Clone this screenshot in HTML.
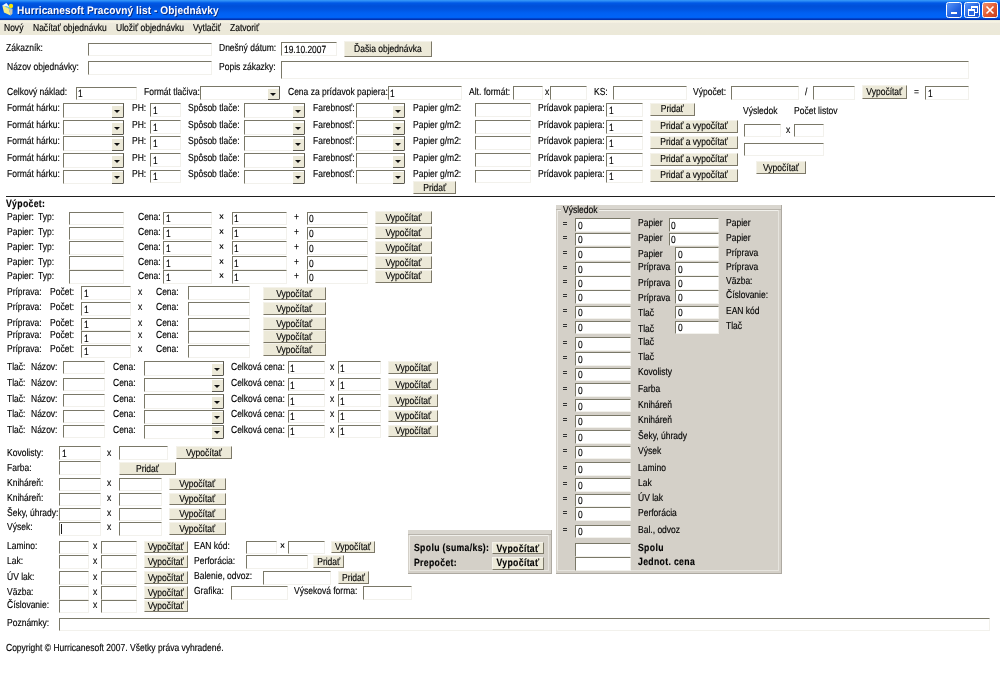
<!DOCTYPE html>
<html><head><meta charset="utf-8"><title>Hurricanesoft Pracovný list - Objednávky</title>
<style>
html,body{text-rendering:geometricPrecision;margin:0;padding:0;width:1000px;height:687px;overflow:hidden;background:#fff;position:relative;font-family:"Liberation Sans",sans-serif;}
#wrap{position:absolute;left:0;top:0;width:1000px;height:687px;will-change:transform;}
.t{position:absolute;white-space:nowrap;font-size:10.2px;line-height:0;color:#000;-webkit-text-stroke:0.15px #000;transform:scaleX(0.835);transform-origin:0 0;}
.t.b{font-weight:bold;font-size:10.4px;letter-spacing:0.4px;}
.in{position:absolute;box-sizing:border-box;background:#fff;border-top:1.5px solid #7a7868;border-left:1.5px solid #7a7868;border-right:1px solid #f2f1ec;border-bottom:1px solid #f2f1ec;}
.in span{-webkit-text-stroke:0.15px #000;position:absolute;left:1.5px;top:2.8px;font-size:10.4px;line-height:10px;color:#000;white-space:nowrap;transform:scaleX(0.81);transform-origin:0 0;}
.sel{border-right:1px solid #5a5850;}
.sel i{position:absolute;right:0;top:1.5px;bottom:-1px;width:11.5px;background:#ece9d8;border-bottom:1.3px solid #5a5850;box-sizing:border-box;}
.sel i:after{content:"";position:absolute;left:2.8px;top:4.2px;border-left:3px solid transparent;border-right:3px solid transparent;border-top:3.5px solid #111;}
.bt{position:absolute;box-sizing:border-box;background:#ece9d8;border-top:1px solid #f4f2ea;border-left:1px solid #f4f2ea;border-right:1.3px solid #7c7868;border-bottom:1.5px solid #7c7868;overflow:hidden;}
.bt span{position:absolute;left:-20px;right:-20px;text-align:center;white-space:nowrap;font-size:10.2px;line-height:0;color:#000;-webkit-text-stroke:0.15px #000;transform:scaleX(0.835);transform-origin:50% 0;}
.bt.b span{font-weight:bold;font-size:10.4px;letter-spacing:0.4px;}
#tb{position:absolute;left:0;top:0;width:1000px;height:20px;background:linear-gradient(#3a9cf8 0px,#2484f4 1.2px,#0058e6 3px,#0050d8 6px,#0054e0 9px,#0060f2 13px,#0064f8 17.4px,#0042c8 18.6px,#0030b0 19.6px,#2050a0 20px);}
#tb .tt{position:absolute;left:16.8px;top:10.9px;font-weight:bold;color:#fff;font-size:11px;line-height:0;letter-spacing:0.1px;text-shadow:1px 1px 0 #0a2a80;transform:scaleX(0.92);transform-origin:0 0;}
#mb{position:absolute;left:0;top:20px;width:1000px;height:15px;background:linear-gradient(#d8dcd8 0px,#f7f4e2 1px,#f4f0e2 2.4px,#ece9dc 3.5px,#ece9d8 100%);}
.wb{position:absolute;top:1.5px;width:16px;height:16px;box-sizing:border-box;border:1px solid #fff;border-radius:2.5px;background:linear-gradient(135deg,#5a96f8,#2262e0 60%,#1850d0);}
</style></head><body><div id="wrap">
<div id="tb">
<svg style="position:absolute;left:0;top:0" width="18" height="18" viewBox="0 0 18 18"><path d="M2.3 5.6 L8.6 7.2 L10.6 15.6 L4 12.6 Z" fill="#f4ec88"/><path d="M8.4 7.4 L12.6 8.8 L12.4 13.8 L10.6 15.4 Z" fill="#c8c4b0"/><path d="M2.2 5.4 L6.4 3.0 L9 6.2 L8.6 7.3 Z" fill="#eef6ff"/><path d="M5.5 6.6 L9 7.8 L11.5 9.4" stroke="#58c8ee" stroke-width="1.1" fill="none"/><circle cx="11" cy="6" r="2.2" fill="#f6e600"/></svg>
<div class="tt">Hurricanesoft Pracovný list - Objednávky</div>
<div class="wb" style="left:946px"><div style="position:absolute;left:4px;top:9px;width:6px;height:2px;background:#fff"></div></div>
<div class="wb" style="left:964px"><div style="position:absolute;left:6px;top:3px;width:5px;height:4px;border:1px solid #fff;border-top-width:2px"></div><div style="position:absolute;left:3px;top:6px;width:5px;height:4px;border:1px solid #fff;border-top-width:2px;background:#2a66e0"></div></div>
<div class="wb" style="left:982px;background:linear-gradient(135deg,#f09070,#e05a30 55%,#c84020)"><svg style="position:absolute;left:2px;top:2px" width="10" height="10" viewBox="0 0 10 10"><path d="M1.5 1.5 L8.5 8.5 M8.5 1.5 L1.5 8.5" stroke="#fff" stroke-width="1.6"/></svg></div>
</div>
<div id="mb"></div>
<div class="t" style="left:4.2px;top:29.17px">Nový</div>
<div class="t" style="left:33px;top:29.17px">Načítať objednávku</div>
<div class="t" style="left:115.7px;top:29.17px">Uložiť objednávku</div>
<div class="t" style="left:192.7px;top:29.17px">Vytlačiť</div>
<div class="t" style="left:230px;top:29.17px">Zatvoriť</div>
<div class="t" style="left:6px;top:49.17px">Zákazník:</div>
<div class="in" style="left:87.5px;top:42.5px;width:124.20px;height:13.20px"></div>
<div class="t" style="left:219px;top:49.17px">Dnešný dátum:</div>
<div class="in" style="left:281.4px;top:42.3px;width:55.90px;height:13.50px"><span>19.10.2007</span></div>
<div class="bt" style="left:344.3px;top:40.7px;width:87.90px;height:16.40px"><span style="top:8.67px">Ďašia objednávka</span></div>
<div class="t" style="left:6.5px;top:68.17px">Názov objednávky:</div>
<div class="in" style="left:87.5px;top:61.2px;width:124.20px;height:13.80px"></div>
<div class="t" style="left:219px;top:68.17px">Popis zákazky:</div>
<div class="in" style="left:281.4px;top:61px;width:687.20px;height:18.40px"></div>
<div class="t" style="left:6.8px;top:93.17px">Celkový náklad:</div>
<div class="in" style="left:75.5px;top:86.5px;width:61.50px;height:13.00px"><span>1</span></div>
<div class="t" style="left:144px;top:93.17px">Formát tlačiva:</div>
<div class="in sel" style="left:200px;top:86px;width:80.00px;height:14.00px"><i></i></div>
<div class="t" style="left:287.5px;top:93.17px">Cena za prídavok papiera:</div>
<div class="in" style="left:387.5px;top:86px;width:74.50px;height:13.50px"><span>1</span></div>
<div class="t" style="left:469px;top:93.17px">Alt. formát:</div>
<div class="in" style="left:512.5px;top:86px;width:30.50px;height:13.50px"></div>
<div class="t" style="left:545px;top:93.17px">x</div>
<div class="in" style="left:550px;top:86px;width:37.00px;height:13.50px"></div>
<div class="t" style="left:594px;top:93.17px">KS:</div>
<div class="in" style="left:612.5px;top:86px;width:74.50px;height:13.50px"></div>
<div class="t" style="left:693.4px;top:93.17px">Výpočet:</div>
<div class="in" style="left:731px;top:86px;width:68.00px;height:13.50px"></div>
<div class="t" style="left:805px;top:93.17px">/</div>
<div class="in" style="left:813px;top:86px;width:42.00px;height:13.50px"></div>
<div class="bt" style="left:862px;top:85.4px;width:44.60px;height:13.20px"><span style="top:7.07px">Vypočítať</span></div>
<div class="t" style="left:913.6px;top:93.17px">=</div>
<div class="in" style="left:925px;top:86px;width:43.60px;height:13.50px"><span>1</span></div>
<div class="t" style="left:6.5px;top:109.17px">Formát hárku:</div>
<div class="in sel" style="left:63px;top:103.2px;width:61.00px;height:14.50px"><i></i></div>
<div class="t" style="left:132px;top:109.17px">PH:</div>
<div class="in" style="left:150px;top:103.2px;width:31.00px;height:13.50px"><span>1</span></div>
<div class="t" style="left:188px;top:109.17px">Spôsob tlače:</div>
<div class="in sel" style="left:244px;top:103.2px;width:61.00px;height:14.50px"><i></i></div>
<div class="t" style="left:312.5px;top:109.17px">Farebnosť:</div>
<div class="in sel" style="left:356px;top:103.2px;width:49.00px;height:14.50px"><i></i></div>
<div class="t" style="left:412.5px;top:109.17px">Papier g/m2:</div>
<div class="in" style="left:475px;top:103.2px;width:56.00px;height:13.50px"></div>
<div class="t" style="left:537.5px;top:109.17px">Prídavok papiera:</div>
<div class="in" style="left:606px;top:103.2px;width:37.00px;height:13.50px"><span>1</span></div>
<div class="bt" style="left:650px;top:102.7px;width:44.60px;height:13.00px"><span style="top:6.37px">Pridať</span></div>
<div class="t" style="left:6.5px;top:126.17px">Formát hárku:</div>
<div class="in sel" style="left:63px;top:120px;width:61.00px;height:14.50px"><i></i></div>
<div class="t" style="left:132px;top:126.17px">PH:</div>
<div class="in" style="left:150px;top:120px;width:31.00px;height:13.50px"><span>1</span></div>
<div class="t" style="left:188px;top:126.17px">Spôsob tlače:</div>
<div class="in sel" style="left:244px;top:120px;width:61.00px;height:14.50px"><i></i></div>
<div class="t" style="left:312.5px;top:126.17px">Farebnosť:</div>
<div class="in sel" style="left:356px;top:120px;width:49.00px;height:14.50px"><i></i></div>
<div class="t" style="left:412.5px;top:126.17px">Papier g/m2:</div>
<div class="in" style="left:475px;top:120px;width:56.00px;height:13.50px"></div>
<div class="t" style="left:537.5px;top:126.17px">Prídavok papiera:</div>
<div class="in" style="left:606px;top:120px;width:37.00px;height:13.50px"><span>1</span></div>
<div class="bt" style="left:650px;top:119.5px;width:88.00px;height:13.00px"><span style="top:6.37px">Pridať a vypočítať</span></div>
<div class="t" style="left:6.5px;top:142.17px">Formát hárku:</div>
<div class="in sel" style="left:63px;top:136.2px;width:61.00px;height:14.50px"><i></i></div>
<div class="t" style="left:132px;top:142.17px">PH:</div>
<div class="in" style="left:150px;top:136.2px;width:31.00px;height:13.50px"><span>1</span></div>
<div class="t" style="left:188px;top:142.17px">Spôsob tlače:</div>
<div class="in sel" style="left:244px;top:136.2px;width:61.00px;height:14.50px"><i></i></div>
<div class="t" style="left:312.5px;top:142.17px">Farebnosť:</div>
<div class="in sel" style="left:356px;top:136.2px;width:49.00px;height:14.50px"><i></i></div>
<div class="t" style="left:412.5px;top:142.17px">Papier g/m2:</div>
<div class="in" style="left:475px;top:136.2px;width:56.00px;height:13.50px"></div>
<div class="t" style="left:537.5px;top:142.17px">Prídavok papiera:</div>
<div class="in" style="left:606px;top:136.2px;width:37.00px;height:13.50px"><span>1</span></div>
<div class="bt" style="left:650px;top:135.7px;width:88.00px;height:13.00px"><span style="top:6.37px">Pridať a vypočítať</span></div>
<div class="t" style="left:6.5px;top:159.17px">Formát hárku:</div>
<div class="in sel" style="left:63px;top:153px;width:61.00px;height:14.50px"><i></i></div>
<div class="t" style="left:132px;top:159.17px">PH:</div>
<div class="in" style="left:150px;top:153px;width:31.00px;height:13.50px"><span>1</span></div>
<div class="t" style="left:188px;top:159.17px">Spôsob tlače:</div>
<div class="in sel" style="left:244px;top:153px;width:61.00px;height:14.50px"><i></i></div>
<div class="t" style="left:312.5px;top:159.17px">Farebnosť:</div>
<div class="in sel" style="left:356px;top:153px;width:49.00px;height:14.50px"><i></i></div>
<div class="t" style="left:412.5px;top:159.17px">Papier g/m2:</div>
<div class="in" style="left:475px;top:153px;width:56.00px;height:13.50px"></div>
<div class="t" style="left:537.5px;top:159.17px">Prídavok papiera:</div>
<div class="in" style="left:606px;top:153px;width:37.00px;height:13.50px"><span>1</span></div>
<div class="bt" style="left:650px;top:152.5px;width:88.00px;height:13.00px"><span style="top:6.37px">Pridať a vypočítať</span></div>
<div class="t" style="left:6.5px;top:175.17px">Formát hárku:</div>
<div class="in sel" style="left:63px;top:169.5px;width:61.00px;height:14.50px"><i></i></div>
<div class="t" style="left:132px;top:175.17px">PH:</div>
<div class="in" style="left:150px;top:169.5px;width:31.00px;height:13.50px"><span>1</span></div>
<div class="t" style="left:188px;top:175.17px">Spôsob tlače:</div>
<div class="in sel" style="left:244px;top:169.5px;width:61.00px;height:14.50px"><i></i></div>
<div class="t" style="left:312.5px;top:175.17px">Farebnosť:</div>
<div class="in sel" style="left:356px;top:169.5px;width:49.00px;height:14.50px"><i></i></div>
<div class="t" style="left:412.5px;top:175.17px">Papier g/m2:</div>
<div class="in" style="left:475px;top:169.5px;width:56.00px;height:13.50px"></div>
<div class="t" style="left:537.5px;top:175.17px">Prídavok papiera:</div>
<div class="in" style="left:606px;top:169.5px;width:37.00px;height:13.50px"><span>1</span></div>
<div class="bt" style="left:650px;top:169.0px;width:88.00px;height:13.00px"><span style="top:6.37px">Pridať a vypočítať</span></div>
<div class="bt" style="left:412.5px;top:181px;width:43.50px;height:13.00px"><span style="top:6.97px">Pridať</span></div>
<div class="t" style="left:743px;top:112.17px">Výsledok</div>
<div class="t" style="left:793.6px;top:112.17px">Počet listov</div>
<div class="in" style="left:744px;top:123.5px;width:37.00px;height:13.20px"></div>
<div class="t" style="left:785.6px;top:131.17px">x</div>
<div class="in" style="left:793.6px;top:123.5px;width:30.40px;height:13.20px"></div>
<div class="in" style="left:744px;top:142.6px;width:80.00px;height:13.00px"></div>
<div class="bt" style="left:756px;top:161.1px;width:50.00px;height:12.50px"><span style="top:6.72px">Vypočítať</span></div>
<div style="position:absolute;left:6px;top:195.6px;width:989.00px;height:1.30px;background:#1e1e1e"></div>
<div class="t b" style="left:6px;top:205.10px">Výpočet:</div>
<div class="t" style="left:7px;top:218.17px">Papier:</div>
<div class="t" style="left:38.4px;top:218.17px">Typ:</div>
<div class="in" style="left:69px;top:211.5px;width:55.20px;height:13.50px"></div>
<div class="t" style="left:137.5px;top:218.17px">Cena:</div>
<div class="in" style="left:163.1px;top:211.5px;width:48.60px;height:13.50px"><span>1</span></div>
<div class="t" style="left:219px;top:217.72px">×</div>
<div class="in" style="left:231.8px;top:211.5px;width:55.20px;height:13.50px"><span>1</span></div>
<div class="t" style="left:294px;top:218.17px">+</div>
<div class="in" style="left:306.8px;top:211.5px;width:61.20px;height:13.50px"><span>0</span></div>
<div class="bt" style="left:375px;top:210.7px;width:57.00px;height:13.00px"><span style="top:6.97px">Vypočítať</span></div>
<div class="t" style="left:7px;top:233.17px">Papier:</div>
<div class="t" style="left:38.4px;top:233.17px">Typ:</div>
<div class="in" style="left:69px;top:226.5px;width:55.20px;height:13.50px"></div>
<div class="t" style="left:137.5px;top:233.17px">Cena:</div>
<div class="in" style="left:163.1px;top:226.5px;width:48.60px;height:13.50px"><span>1</span></div>
<div class="t" style="left:219px;top:232.72px">×</div>
<div class="in" style="left:231.8px;top:226.5px;width:55.20px;height:13.50px"><span>1</span></div>
<div class="t" style="left:294px;top:233.17px">+</div>
<div class="in" style="left:306.8px;top:226.5px;width:61.20px;height:13.50px"><span>0</span></div>
<div class="bt" style="left:375px;top:225.7px;width:57.00px;height:13.00px"><span style="top:6.97px">Vypočítať</span></div>
<div class="t" style="left:7px;top:248.17px">Papier:</div>
<div class="t" style="left:38.4px;top:248.17px">Typ:</div>
<div class="in" style="left:69px;top:241.4px;width:55.20px;height:13.50px"></div>
<div class="t" style="left:137.5px;top:248.17px">Cena:</div>
<div class="in" style="left:163.1px;top:241.4px;width:48.60px;height:13.50px"><span>1</span></div>
<div class="t" style="left:219px;top:247.72px">×</div>
<div class="in" style="left:231.8px;top:241.4px;width:55.20px;height:13.50px"><span>1</span></div>
<div class="t" style="left:294px;top:248.17px">+</div>
<div class="in" style="left:306.8px;top:241.4px;width:61.20px;height:13.50px"><span>0</span></div>
<div class="bt" style="left:375px;top:240.6px;width:57.00px;height:13.00px"><span style="top:6.97px">Vypočítať</span></div>
<div class="t" style="left:7px;top:263.17px">Papier:</div>
<div class="t" style="left:38.4px;top:263.17px">Typ:</div>
<div class="in" style="left:69px;top:256.4px;width:55.20px;height:13.50px"></div>
<div class="t" style="left:137.5px;top:263.17px">Cena:</div>
<div class="in" style="left:163.1px;top:256.4px;width:48.60px;height:13.50px"><span>1</span></div>
<div class="t" style="left:219px;top:262.72px">×</div>
<div class="in" style="left:231.8px;top:256.4px;width:55.20px;height:13.50px"><span>1</span></div>
<div class="t" style="left:294px;top:263.17px">+</div>
<div class="in" style="left:306.8px;top:256.4px;width:61.20px;height:13.50px"><span>0</span></div>
<div class="bt" style="left:375px;top:255.59999999999997px;width:57.00px;height:13.00px"><span style="top:6.97px">Vypočítať</span></div>
<div class="t" style="left:7px;top:277.17px">Papier:</div>
<div class="t" style="left:38.4px;top:277.17px">Typ:</div>
<div class="in" style="left:69px;top:270.3px;width:55.20px;height:13.50px"></div>
<div class="t" style="left:137.5px;top:277.17px">Cena:</div>
<div class="in" style="left:163.1px;top:270.3px;width:48.60px;height:13.50px"><span>1</span></div>
<div class="t" style="left:219px;top:276.72px">×</div>
<div class="in" style="left:231.8px;top:270.3px;width:55.20px;height:13.50px"><span>1</span></div>
<div class="t" style="left:294px;top:277.17px">+</div>
<div class="in" style="left:306.8px;top:270.3px;width:61.20px;height:13.50px"><span>0</span></div>
<div class="bt" style="left:375px;top:269.5px;width:57.00px;height:13.00px"><span style="top:6.97px">Vypočítať</span></div>
<div class="t" style="left:7px;top:293.17px">Príprava:</div>
<div class="t" style="left:50px;top:293.17px">Počet:</div>
<div class="in" style="left:81px;top:286px;width:49.50px;height:13.50px"><span>1</span></div>
<div class="t" style="left:137.5px;top:293.17px">x</div>
<div class="t" style="left:156px;top:293.17px">Cena:</div>
<div class="in" style="left:188px;top:286px;width:61.50px;height:13.50px"></div>
<div class="bt" style="left:263px;top:287px;width:62.50px;height:12.50px"><span style="top:6.72px">Vypočítať</span></div>
<div class="t" style="left:7px;top:308.17px">Príprava:</div>
<div class="t" style="left:50px;top:308.17px">Počet:</div>
<div class="in" style="left:81px;top:302px;width:49.50px;height:13.50px"><span>1</span></div>
<div class="t" style="left:137.5px;top:308.17px">x</div>
<div class="t" style="left:156px;top:308.17px">Cena:</div>
<div class="in" style="left:188px;top:302px;width:61.50px;height:13.50px"></div>
<div class="bt" style="left:263px;top:302px;width:62.50px;height:12.50px"><span style="top:6.72px">Vypočítať</span></div>
<div class="t" style="left:7px;top:324.17px">Príprava:</div>
<div class="t" style="left:50px;top:324.17px">Počet:</div>
<div class="in" style="left:81px;top:317.5px;width:49.50px;height:13.50px"><span>1</span></div>
<div class="t" style="left:137.5px;top:324.17px">x</div>
<div class="t" style="left:156px;top:324.17px">Cena:</div>
<div class="in" style="left:188px;top:317.5px;width:61.50px;height:13.50px"></div>
<div class="bt" style="left:263px;top:317px;width:62.50px;height:12.50px"><span style="top:6.72px">Vypočítať</span></div>
<div class="t" style="left:7px;top:336.17px">Príprava:</div>
<div class="t" style="left:50px;top:336.17px">Počet:</div>
<div class="in" style="left:81px;top:330.8px;width:49.50px;height:13.50px"><span>1</span></div>
<div class="t" style="left:137.5px;top:336.17px">x</div>
<div class="t" style="left:156px;top:336.17px">Cena:</div>
<div class="in" style="left:188px;top:330.8px;width:61.50px;height:13.50px"></div>
<div class="bt" style="left:263px;top:330px;width:62.50px;height:12.50px"><span style="top:6.72px">Vypočítať</span></div>
<div class="t" style="left:7px;top:350.17px">Príprava:</div>
<div class="t" style="left:50px;top:350.17px">Počet:</div>
<div class="in" style="left:81px;top:344.5px;width:49.50px;height:13.50px"><span>1</span></div>
<div class="t" style="left:137.5px;top:350.17px">x</div>
<div class="t" style="left:156px;top:350.17px">Cena:</div>
<div class="in" style="left:188px;top:344.5px;width:61.50px;height:13.50px"></div>
<div class="bt" style="left:263px;top:343px;width:62.50px;height:12.50px"><span style="top:6.72px">Vypočítať</span></div>
<div class="t" style="left:7px;top:368.17px">Tlač:</div>
<div class="t" style="left:31px;top:368.17px">Názov:</div>
<div class="in" style="left:63px;top:361.2px;width:42.00px;height:13.20px"></div>
<div class="t" style="left:112.5px;top:368.17px">Cena:</div>
<div class="in sel" style="left:144px;top:361.2px;width:80.00px;height:14.50px"><i></i></div>
<div class="t" style="left:231px;top:368.17px">Celková cena:</div>
<div class="in" style="left:287.5px;top:361.2px;width:37.00px;height:13.20px"><span>1</span></div>
<div class="t" style="left:329.5px;top:368.17px">x</div>
<div class="in" style="left:337.5px;top:361.2px;width:43.50px;height:13.20px"><span>1</span></div>
<div class="bt" style="left:387.5px;top:361.2px;width:50.50px;height:12.50px"><span style="top:6.72px">Vypočítať</span></div>
<div class="t" style="left:7px;top:384.17px">Tlač:</div>
<div class="t" style="left:31px;top:384.17px">Názov:</div>
<div class="in" style="left:63px;top:377.9px;width:42.00px;height:13.20px"></div>
<div class="t" style="left:112.5px;top:384.17px">Cena:</div>
<div class="in sel" style="left:144px;top:377.9px;width:80.00px;height:14.50px"><i></i></div>
<div class="t" style="left:231px;top:384.17px">Celková cena:</div>
<div class="in" style="left:287.5px;top:377.9px;width:37.00px;height:13.20px"><span>1</span></div>
<div class="t" style="left:329.5px;top:384.17px">x</div>
<div class="in" style="left:337.5px;top:377.9px;width:43.50px;height:13.20px"><span>1</span></div>
<div class="bt" style="left:387.5px;top:377.9px;width:50.50px;height:12.50px"><span style="top:6.72px">Vypočítať</span></div>
<div class="t" style="left:7px;top:400.17px">Tlač:</div>
<div class="t" style="left:31px;top:400.17px">Názov:</div>
<div class="in" style="left:63px;top:394px;width:42.00px;height:13.20px"></div>
<div class="t" style="left:112.5px;top:400.17px">Cena:</div>
<div class="in sel" style="left:144px;top:394px;width:80.00px;height:14.50px"><i></i></div>
<div class="t" style="left:231px;top:400.17px">Celková cena:</div>
<div class="in" style="left:287.5px;top:394px;width:37.00px;height:13.20px"><span>1</span></div>
<div class="t" style="left:329.5px;top:400.17px">x</div>
<div class="in" style="left:337.5px;top:394px;width:43.50px;height:13.20px"><span>1</span></div>
<div class="bt" style="left:387.5px;top:394px;width:50.50px;height:12.50px"><span style="top:6.72px">Vypočítať</span></div>
<div class="t" style="left:7px;top:415.17px">Tlač:</div>
<div class="t" style="left:31px;top:415.17px">Názov:</div>
<div class="in" style="left:63px;top:409.5px;width:42.00px;height:13.20px"></div>
<div class="t" style="left:112.5px;top:415.17px">Cena:</div>
<div class="in sel" style="left:144px;top:409.5px;width:80.00px;height:14.50px"><i></i></div>
<div class="t" style="left:231px;top:415.17px">Celková cena:</div>
<div class="in" style="left:287.5px;top:409.5px;width:37.00px;height:13.20px"><span>1</span></div>
<div class="t" style="left:329.5px;top:415.17px">x</div>
<div class="in" style="left:337.5px;top:409.5px;width:43.50px;height:13.20px"><span>1</span></div>
<div class="bt" style="left:387.5px;top:409.5px;width:50.50px;height:12.50px"><span style="top:6.72px">Vypočítať</span></div>
<div class="t" style="left:7px;top:431.17px">Tlač:</div>
<div class="t" style="left:31px;top:431.17px">Názov:</div>
<div class="in" style="left:63px;top:424.6px;width:42.00px;height:13.20px"></div>
<div class="t" style="left:112.5px;top:431.17px">Cena:</div>
<div class="in sel" style="left:144px;top:424.6px;width:80.00px;height:14.50px"><i></i></div>
<div class="t" style="left:231px;top:431.17px">Celková cena:</div>
<div class="in" style="left:287.5px;top:424.6px;width:37.00px;height:13.20px"><span>1</span></div>
<div class="t" style="left:329.5px;top:431.17px">x</div>
<div class="in" style="left:337.5px;top:424.6px;width:43.50px;height:13.20px"><span>1</span></div>
<div class="bt" style="left:387.5px;top:424.6px;width:50.50px;height:12.50px"><span style="top:6.72px">Vypočítať</span></div>
<div class="t" style="left:6.5px;top:454.17px">Kovolisty:</div>
<div class="in" style="left:59px;top:446px;width:42.00px;height:13.50px"><span>1</span></div>
<div class="t" style="left:106.5px;top:454.17px">x</div>
<div class="in" style="left:119px;top:446px;width:48.50px;height:13.50px"></div>
<div class="bt" style="left:176px;top:446px;width:56.00px;height:12.50px"><span style="top:6.72px">Vypočítať</span></div>
<div class="t" style="left:6.5px;top:469.17px">Farba:</div>
<div class="in" style="left:59px;top:461px;width:42.00px;height:13.50px"></div>
<div class="bt" style="left:119px;top:462px;width:57.00px;height:12.50px"><span style="top:6.72px">Pridať</span></div>
<div class="t" style="left:6.5px;top:484.17px">Kniháreň:</div>
<div class="in" style="left:59px;top:477.5px;width:42.00px;height:13.50px"></div>
<div class="t" style="left:106.5px;top:484.17px">x</div>
<div class="in" style="left:119px;top:477.5px;width:43.00px;height:13.50px"></div>
<div class="bt" style="left:169px;top:477.5px;width:56.50px;height:12.50px"><span style="top:6.72px">Vypočítať</span></div>
<div class="t" style="left:6.5px;top:499.17px">Kniháreň:</div>
<div class="in" style="left:59px;top:492.5px;width:42.00px;height:13.50px"></div>
<div class="t" style="left:106.5px;top:499.17px">x</div>
<div class="in" style="left:119px;top:492.5px;width:43.00px;height:13.50px"></div>
<div class="bt" style="left:169px;top:492.5px;width:56.50px;height:12.50px"><span style="top:6.72px">Vypočítať</span></div>
<div class="t" style="left:6.5px;top:514.17px">Šeky, úhrady:</div>
<div class="in" style="left:59px;top:507.5px;width:42.00px;height:13.50px"></div>
<div class="t" style="left:106.5px;top:514.17px">x</div>
<div class="in" style="left:119px;top:507.5px;width:43.00px;height:13.50px"></div>
<div class="bt" style="left:169px;top:507.5px;width:56.50px;height:12.50px"><span style="top:6.72px">Vypočítať</span></div>
<div class="t" style="left:6.5px;top:528.17px">Výsek:</div>
<div class="in" style="left:59px;top:522px;width:42.00px;height:13.50px"></div>
<div class="t" style="left:106.5px;top:528.17px">x</div>
<div class="in" style="left:119px;top:522px;width:43.00px;height:13.50px"></div>
<div class="bt" style="left:169px;top:522px;width:56.50px;height:12.50px"><span style="top:6.72px">Vypočítať</span></div>
<div style="position:absolute;left:60.9px;top:523.8px;width:1.10px;height:9.90px;background:#1a1a1a"></div>
<div class="t" style="left:6.5px;top:547.17px">Lamino:</div>
<div class="in" style="left:59px;top:540.5px;width:30.00px;height:13.50px"></div>
<div class="t" style="left:92.5px;top:547.17px">x</div>
<div class="in" style="left:100.5px;top:540.5px;width:36.50px;height:13.50px"></div>
<div class="bt" style="left:144px;top:540.5px;width:43.50px;height:12.50px"><span style="top:6.72px">Vypočítať</span></div>
<div class="t" style="left:6.5px;top:562.17px">Lak:</div>
<div class="in" style="left:59px;top:555px;width:30.00px;height:13.50px"></div>
<div class="t" style="left:92.5px;top:562.17px">x</div>
<div class="in" style="left:100.5px;top:555px;width:36.50px;height:13.50px"></div>
<div class="bt" style="left:144px;top:555px;width:43.50px;height:12.50px"><span style="top:6.72px">Vypočítať</span></div>
<div class="t" style="left:6.5px;top:578.17px">ÚV lak:</div>
<div class="in" style="left:59px;top:571px;width:30.00px;height:13.50px"></div>
<div class="t" style="left:92.5px;top:578.17px">x</div>
<div class="in" style="left:100.5px;top:571px;width:36.50px;height:13.50px"></div>
<div class="bt" style="left:144px;top:571px;width:43.50px;height:12.50px"><span style="top:6.72px">Vypočítať</span></div>
<div class="t" style="left:6.5px;top:593.17px">Väzba:</div>
<div class="in" style="left:59px;top:586px;width:30.00px;height:13.50px"></div>
<div class="t" style="left:92.5px;top:593.17px">x</div>
<div class="in" style="left:100.5px;top:586px;width:36.50px;height:13.50px"></div>
<div class="bt" style="left:144px;top:586px;width:43.50px;height:12.50px"><span style="top:6.72px">Vypočítať</span></div>
<div class="t" style="left:6.5px;top:606.17px">Číslovanie:</div>
<div class="in" style="left:59px;top:599.5px;width:30.00px;height:13.50px"></div>
<div class="t" style="left:92.5px;top:606.17px">x</div>
<div class="in" style="left:100.5px;top:599.5px;width:36.50px;height:13.50px"></div>
<div class="bt" style="left:144px;top:599.5px;width:43.50px;height:12.50px"><span style="top:6.72px">Vypočítať</span></div>
<div class="t" style="left:194px;top:547.17px">EAN kód:</div>
<div class="in" style="left:246px;top:540.5px;width:31.00px;height:13.50px"></div>
<div class="t" style="left:279.5px;top:546.72px">×</div>
<div class="in" style="left:288px;top:540.5px;width:36.50px;height:13.50px"></div>
<div class="bt" style="left:331px;top:540.5px;width:44.00px;height:12.50px"><span style="top:6.72px">Vypočítať</span></div>
<div class="t" style="left:194px;top:562.17px">Perforácia:</div>
<div class="in" style="left:246px;top:555px;width:62.00px;height:13.50px"></div>
<div class="bt" style="left:312.5px;top:555px;width:31.50px;height:12.50px"><span style="top:6.72px">Pridať</span></div>
<div class="t" style="left:194px;top:577.17px">Balenie, odvoz:</div>
<div class="in" style="left:262.5px;top:571px;width:68.50px;height:13.50px"></div>
<div class="bt" style="left:338px;top:571px;width:31.00px;height:12.50px"><span style="top:6.72px">Pridať</span></div>
<div class="t" style="left:194px;top:592.17px">Grafika:</div>
<div class="in" style="left:231px;top:586px;width:56.50px;height:13.50px"></div>
<div class="t" style="left:294px;top:592.17px">Výseková forma:</div>
<div class="in" style="left:363px;top:586px;width:49.00px;height:13.50px"></div>
<div class="t" style="left:6.5px;top:624.17px">Poznámky:</div>
<div class="in" style="left:59px;top:618px;width:930.60px;height:13.00px"></div>
<div class="t" style="left:6px;top:649.17px">Copyright © Hurricanesoft 2007. Všetky práva vyhradené.</div>
<div style="position:absolute;left:408px;top:530px;width:143.70px;height:43.60px;background:#d4d0c8;border-right:1px solid #aeaaa2;border-bottom:1px solid #aeaaa2;box-sizing:border-box"></div>
<div style="position:absolute;left:408px;top:530px;width:142.70px;height:4.00px;background:#d9d6cf"></div>
<div style="position:absolute;left:408px;top:534px;width:142.70px;height:1.00px;background:#b9b5ad"></div>
<div style="position:absolute;left:409px;top:535px;width:138.70px;height:1.00px;background:#f1f0eb"></div>
<div style="position:absolute;left:409px;top:535px;width:1.00px;height:35.60px;background:#eceae4"></div>
<div style="position:absolute;left:547.7px;top:535px;width:1.00px;height:35.60px;background:#e6e4de"></div>
<div style="position:absolute;left:409px;top:569.6px;width:139.70px;height:1.00px;background:#e6e4de"></div>
<div class="t b" style="left:414px;top:549.10px">Spolu (suma/ks):</div>
<div class="bt b" style="left:492px;top:542.4px;width:52.00px;height:12.00px"><span style="top:6.40px">Vypočítať</span></div>
<div class="t b" style="left:414px;top:564.10px">Prepočet:</div>
<div class="bt b" style="left:492px;top:556.5px;width:52.00px;height:13.10px"><span style="top:6.95px">Vypočítať</span></div>
<div style="position:absolute;left:556px;top:205px;width:225.80px;height:368.60px;background:#d4d0c8;border-right:1px solid #aeaaa2;border-bottom:1px solid #aeaaa2;box-sizing:border-box"></div>
<div style="position:absolute;left:556px;top:205px;width:224.80px;height:4.00px;background:#d9d6cf"></div>
<div style="position:absolute;left:556px;top:209px;width:224.80px;height:1.00px;background:#b9b5ad"></div>
<div style="position:absolute;left:557px;top:210px;width:220.80px;height:1.00px;background:#f1f0eb"></div>
<div style="position:absolute;left:557px;top:210px;width:1.00px;height:360.60px;background:#eceae4"></div>
<div style="position:absolute;left:777.8px;top:210px;width:1.00px;height:360.60px;background:#e6e4de"></div>
<div style="position:absolute;left:557px;top:569.6px;width:221.80px;height:1.00px;background:#e6e4de"></div>
<div style="position:absolute;left:561px;top:205px;width:38.00px;height:7.00px;background:#d4d0c8"></div>
<div class="t" style="left:563.3px;top:211.17px">Výsledok</div>
<div style="position:absolute;left:563.3px;top:221.6px;width:4.20px;height:3.20px;border-top:1.2px solid #333;border-bottom:1.2px solid #333;box-sizing:border-box"></div>
<div class="in" style="left:575.4px;top:218px;width:56.10px;height:13.50px"><span>0</span></div>
<div class="t" style="left:637.8px;top:224.17px">Papier</div>
<div class="in" style="left:668.8px;top:218px;width:50.20px;height:13.50px"><span>0</span></div>
<div style="position:absolute;left:563.3px;top:236.29999999999998px;width:4.20px;height:3.20px;border-top:1.2px solid #333;border-bottom:1.2px solid #333;box-sizing:border-box"></div>
<div class="in" style="left:575.4px;top:232.7px;width:56.10px;height:13.50px"><span>0</span></div>
<div class="t" style="left:637.8px;top:239.17px">Papier</div>
<div class="in" style="left:668.8px;top:232.7px;width:50.20px;height:13.50px"><span>0</span></div>
<div style="position:absolute;left:563.3px;top:251.0px;width:4.20px;height:3.20px;border-top:1.2px solid #333;border-bottom:1.2px solid #333;box-sizing:border-box"></div>
<div class="in" style="left:575.4px;top:247.4px;width:56.10px;height:13.50px"><span>0</span></div>
<div class="t" style="left:637.8px;top:255.17px">Papier</div>
<div class="in" style="left:675.4px;top:247.4px;width:43.60px;height:13.50px"><span>0</span></div>
<div style="position:absolute;left:563.3px;top:265.6px;width:4.20px;height:3.20px;border-top:1.2px solid #333;border-bottom:1.2px solid #333;box-sizing:border-box"></div>
<div class="in" style="left:575.4px;top:262px;width:56.10px;height:13.50px"><span>0</span></div>
<div class="t" style="left:637.8px;top:268.17px">Príprava</div>
<div class="in" style="left:675.4px;top:262px;width:43.60px;height:13.50px"><span>0</span></div>
<div style="position:absolute;left:563.3px;top:279.8px;width:4.20px;height:3.20px;border-top:1.2px solid #333;border-bottom:1.2px solid #333;box-sizing:border-box"></div>
<div class="in" style="left:575.4px;top:276.2px;width:56.10px;height:13.50px"><span>0</span></div>
<div class="t" style="left:637.8px;top:284.17px">Príprava</div>
<div class="in" style="left:675.4px;top:276.2px;width:43.60px;height:13.50px"><span>0</span></div>
<div style="position:absolute;left:563.3px;top:293.90000000000003px;width:4.20px;height:3.20px;border-top:1.2px solid #333;border-bottom:1.2px solid #333;box-sizing:border-box"></div>
<div class="in" style="left:575.4px;top:290.3px;width:56.10px;height:13.50px"><span>0</span></div>
<div class="t" style="left:637.8px;top:299.17px">Príprava</div>
<div class="in" style="left:675.4px;top:290.3px;width:43.60px;height:13.50px"><span>0</span></div>
<div style="position:absolute;left:563.3px;top:309.1px;width:4.20px;height:3.20px;border-top:1.2px solid #333;border-bottom:1.2px solid #333;box-sizing:border-box"></div>
<div class="in" style="left:575.4px;top:305.5px;width:56.10px;height:13.50px"><span>0</span></div>
<div class="t" style="left:637.8px;top:314.17px">Tlač</div>
<div class="in" style="left:675.4px;top:305.5px;width:43.60px;height:13.50px"><span>0</span></div>
<div style="position:absolute;left:563.3px;top:324.20000000000005px;width:4.20px;height:3.20px;border-top:1.2px solid #333;border-bottom:1.2px solid #333;box-sizing:border-box"></div>
<div class="in" style="left:575.4px;top:320.6px;width:56.10px;height:13.50px"><span>0</span></div>
<div class="t" style="left:637.8px;top:330.17px">Tlač</div>
<div class="in" style="left:675.4px;top:320.6px;width:43.60px;height:13.50px"><span>0</span></div>
<div style="position:absolute;left:563.3px;top:340.90000000000003px;width:4.20px;height:3.20px;border-top:1.2px solid #333;border-bottom:1.2px solid #333;box-sizing:border-box"></div>
<div class="in" style="left:575.4px;top:337.3px;width:56.10px;height:13.50px"><span>0</span></div>
<div class="t" style="left:637.8px;top:343.17px">Tlač</div>
<div style="position:absolute;left:563.3px;top:355.90000000000003px;width:4.20px;height:3.20px;border-top:1.2px solid #333;border-bottom:1.2px solid #333;box-sizing:border-box"></div>
<div class="in" style="left:575.4px;top:352.3px;width:56.10px;height:13.50px"><span>0</span></div>
<div class="t" style="left:637.8px;top:358.17px">Tlač</div>
<div style="position:absolute;left:563.3px;top:371.1px;width:4.20px;height:3.20px;border-top:1.2px solid #333;border-bottom:1.2px solid #333;box-sizing:border-box"></div>
<div class="in" style="left:575.4px;top:367.5px;width:56.10px;height:13.50px"><span>0</span></div>
<div class="t" style="left:637.8px;top:373.17px">Kovolisty</div>
<div style="position:absolute;left:563.3px;top:386.8px;width:4.20px;height:3.20px;border-top:1.2px solid #333;border-bottom:1.2px solid #333;box-sizing:border-box"></div>
<div class="in" style="left:575.4px;top:383.2px;width:56.10px;height:13.50px"><span>0</span></div>
<div class="t" style="left:637.8px;top:390.17px">Farba</div>
<div style="position:absolute;left:563.3px;top:402.5px;width:4.20px;height:3.20px;border-top:1.2px solid #333;border-bottom:1.2px solid #333;box-sizing:border-box"></div>
<div class="in" style="left:575.4px;top:398.9px;width:56.10px;height:13.50px"><span>0</span></div>
<div class="t" style="left:637.8px;top:406.17px">Kniháreň</div>
<div style="position:absolute;left:563.3px;top:418.20000000000005px;width:4.20px;height:3.20px;border-top:1.2px solid #333;border-bottom:1.2px solid #333;box-sizing:border-box"></div>
<div class="in" style="left:575.4px;top:414.6px;width:56.10px;height:13.50px"><span>0</span></div>
<div class="t" style="left:637.8px;top:421.17px">Kniháreň</div>
<div style="position:absolute;left:563.3px;top:433.90000000000003px;width:4.20px;height:3.20px;border-top:1.2px solid #333;border-bottom:1.2px solid #333;box-sizing:border-box"></div>
<div class="in" style="left:575.4px;top:430.3px;width:56.10px;height:13.50px"><span>0</span></div>
<div class="t" style="left:637.8px;top:436.67px">Šeky, úhrady</div>
<div style="position:absolute;left:563.3px;top:449.1px;width:4.20px;height:3.20px;border-top:1.2px solid #333;border-bottom:1.2px solid #333;box-sizing:border-box"></div>
<div class="in" style="left:575.4px;top:445.5px;width:56.10px;height:13.50px"><span>0</span></div>
<div class="t" style="left:637.8px;top:452.17px">Výsek</div>
<div style="position:absolute;left:563.3px;top:465.6px;width:4.20px;height:3.20px;border-top:1.2px solid #333;border-bottom:1.2px solid #333;box-sizing:border-box"></div>
<div class="in" style="left:575.4px;top:462px;width:56.10px;height:13.50px"><span>0</span></div>
<div class="t" style="left:637.8px;top:469.17px">Lamino</div>
<div style="position:absolute;left:563.3px;top:481.6px;width:4.20px;height:3.20px;border-top:1.2px solid #333;border-bottom:1.2px solid #333;box-sizing:border-box"></div>
<div class="in" style="left:575.4px;top:478px;width:56.10px;height:13.50px"><span>0</span></div>
<div class="t" style="left:637.8px;top:484.17px">Lak</div>
<div style="position:absolute;left:563.3px;top:497.1px;width:4.20px;height:3.20px;border-top:1.2px solid #333;border-bottom:1.2px solid #333;box-sizing:border-box"></div>
<div class="in" style="left:575.4px;top:493.5px;width:56.10px;height:13.50px"><span>0</span></div>
<div class="t" style="left:637.8px;top:499.17px">ÚV lak</div>
<div style="position:absolute;left:563.3px;top:510.6px;width:4.20px;height:3.20px;border-top:1.2px solid #333;border-bottom:1.2px solid #333;box-sizing:border-box"></div>
<div class="in" style="left:575.4px;top:507px;width:56.10px;height:13.50px"><span>0</span></div>
<div class="t" style="left:637.8px;top:514.17px">Perforácia</div>
<div style="position:absolute;left:563.3px;top:528.3000000000001px;width:4.20px;height:3.20px;border-top:1.2px solid #333;border-bottom:1.2px solid #333;box-sizing:border-box"></div>
<div class="in" style="left:575.4px;top:524.7px;width:56.10px;height:13.50px"><span>0</span></div>
<div class="t" style="left:637.8px;top:531.17px">Bal., odvoz</div>
<div class="t" style="left:725.5px;top:224.17px">Papier</div>
<div class="t" style="left:725.5px;top:239.17px">Papier</div>
<div class="t" style="left:725.5px;top:254.17px">Príprava</div>
<div class="t" style="left:725.5px;top:268.17px">Príprava</div>
<div class="t" style="left:725.5px;top:282.17px">Väzba:</div>
<div class="t" style="left:725.5px;top:296.17px">Číslovanie:</div>
<div class="t" style="left:725.5px;top:312.17px">EAN kód</div>
<div class="t" style="left:725.5px;top:327.17px">Tlač</div>
<div class="in" style="left:575.3px;top:543.2px;width:56.20px;height:14.00px"></div>
<div class="t b" style="left:637.6px;top:549.10px">Spolu</div>
<div class="in" style="left:575.3px;top:557.2px;width:56.20px;height:14.20px"></div>
<div class="t b" style="left:637.6px;top:563.10px">Jednot. cena</div>
</div></body></html>
